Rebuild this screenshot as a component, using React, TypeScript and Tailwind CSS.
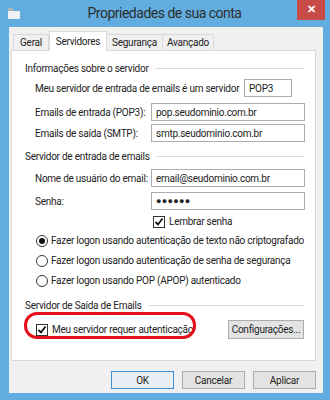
import React from "react";

const font = { fontFamily: 'Roboto, "Liberation Sans", sans-serif' };

function Legend({ text }: { text: string }) {
  return (
    <div className="flex h-[13px] items-center gap-[6px] pr-[11px] text-[#222]">
      <span className="whitespace-nowrap">{text}</span>
      <span className="h-px flex-1 bg-[#dcdcdc]" />
    </div>
  );
}

function Field({ label, value, dots }: { label: string; value: string; dots?: boolean }) {
  return (
    <div className="flex h-[18px] items-center">
      <span className="w-[116px] shrink-0 whitespace-nowrap text-[#222]">{label}</span>
      <div
        className={`flex h-[18px] w-[154px] items-center border border-[#abadb3] bg-white px-[4px] ${
          dots ? "text-[9px] tracking-[0.3px]" : ""
        }`}
      >
        {value}
      </div>
    </div>
  );
}

function Check({ label }: { label: string }) {
  return (
    <div className="flex h-[13px] items-center gap-[4px]">
      <span className="flex h-[12px] w-[12px] items-center justify-center border border-[#333] bg-white">
        <svg width="10" height="10" viewBox="0 0 10 10">
          <path d="M1.5 5 L4 7.5 L8.5 1.5" fill="none" stroke="#111" strokeWidth="1.8" />
        </svg>
      </span>
      <span className="whitespace-nowrap">{label}</span>
    </div>
  );
}

function Radio({ label, on }: { label: string; on?: boolean }) {
  return (
    <div className="flex h-[13px] items-center gap-[3px]">
      <span className="flex h-[12px] w-[12px] items-center justify-center rounded-full border border-[#333] bg-white">
        {on && <span className="h-[6px] w-[6px] rounded-full bg-[#111]" />}
      </span>
      <span className="whitespace-nowrap">{label}</span>
    </div>
  );
}

function Btn({ label, focus }: { label: string; focus?: boolean }) {
  return (
    <div
      className={`flex h-[18px] w-[63px] items-center justify-center border text-[#222] ${
        focus ? "border-[#3c8fd9] bg-[#e8eef4]" : "border-[#acacac] bg-[#e3e3e3]"
      }`}
    >
      {label}
    </div>
  );
}

export default function App() {
  return (
    <div className="flex h-[400px] w-[330px] flex-col bg-[#62ade0]" style={font}>
      <div className="flex h-[27px] items-start">
        <div className="ml-[8px] mt-[8px] flex h-[11px] w-[12px] flex-col">
          <span className="h-[3px] w-[5px] bg-[#a9b4bc]" />
          <span className="h-[8px] w-[12px] rounded-[1px] bg-[#eef2f5]" />
        </div>
        <div className="flex-1 pl-[12px] pt-[5px] text-center text-[14px] leading-[16px] tracking-[-0.5px] text-[#2d2d2d]">
          Propriedades de sua conta
        </div>
        <div className="mr-[5px] flex h-[20px] w-[28px] items-center justify-center bg-[#c74c48] text-[11px] font-bold text-white">
          ✕
        </div>
      </div>

      <div className="mb-[7px] ml-[9px] mr-[7px] flex flex-1 flex-col bg-[#f0f0f0] text-[10px] leading-[13px] tracking-[-0.25px] text-[#222]">
        <div className="ml-[4px] mt-[4px] flex h-[19px] items-end">
          <div className="flex h-[16px] w-[36px] items-center justify-center border border-b-0 border-[#d9d9d9] bg-[#f0f0f0]">
            Geral
          </div>
          <div className="relative z-10 -mb-px flex h-[20px] w-[58px] items-center justify-center border border-b-0 border-[#d9d9d9] bg-white">
            Servidores
          </div>
          <div className="flex h-[16px] w-[56px] items-center justify-center border border-b-0 border-l-0 border-[#d9d9d9] bg-[#f0f0f0]">
            Segurança
          </div>
          <div className="flex h-[16px] w-[51px] items-center justify-center border border-b-0 border-l-0 border-[#d9d9d9] bg-[#f0f0f0]">
            Avançado
          </div>
        </div>

        <div className="relative ml-[2px] mr-[7px] flex h-[311px] flex-col border border-[#d9d9d9] bg-white pl-[13px] pt-[11px]">
          <Legend text="Informações sobre o servidor" />
          <div className="mt-[4px] flex flex-col gap-[3px] pl-[10px]">
            <div className="flex h-[18px] items-center">
              <span className="w-[209px] shrink-0 whitespace-nowrap">Meu servidor de entrada de emails é um servidor</span>
              <div className="flex h-[18px] w-[48px] items-center border border-[#abadb3] bg-white px-[4px]">POP3</div>
            </div>
            <div className="mt-[3px]">
              <Field label="Emails de entrada (POP3):" value="pop.seudominio.com.br" />
            </div>
            <Field label="Emails de saída (SMTP):" value="smtp.seudominio.com.br" />
          </div>

          <div className="mt-[8px]">
            <Legend text="Servidor de entrada de emails" />
          </div>
          <div className="mt-[6px] flex flex-col gap-[5px] pl-[10px]">
            <Field label="Nome de usuário do email:" value="email@seudominio.com.br" />
            <Field label="Senha:" value="●●●●●●" dots />
          </div>
          <div className="ml-[128px] mt-[5px]">
            <Check label="Lembrar senha" />
          </div>
          <div className="mt-[6px] flex flex-col gap-[7px] pl-[11px]">
            <Radio label="Fazer logon usando autenticação de texto não criptografado" on />
            <Radio label="Fazer logon usando autenticação de senha de segurança" />
            <Radio label="Fazer logon usando POP (APOP) autenticado" />
          </div>

          <div className="mt-[12px]">
            <Legend text="Servidor de Saída de Emails" />
          </div>
          <div className="mt-[8px] flex items-center justify-between pl-[11px] pr-[11px]">
            <Check label="Meu servidor requer autenticação" />
            <div className="flex h-[19px] w-[76px] items-center justify-center border border-[#acacac] bg-[#e3e3e3]">
              Configurações...
            </div>
          </div>
          <div className="pointer-events-none absolute left-[12px] top-[261px] h-[27px] w-[172px] rounded-[13px] border-[3px] border-[#e3101c]" />
        </div>

        <div className="mt-[10px] flex justify-end gap-[8px] pr-[7px]">
          <Btn label="OK" focus />
          <Btn label="Cancelar" />
          <Btn label="Aplicar" />
        </div>
      </div>
    </div>
  );
}
